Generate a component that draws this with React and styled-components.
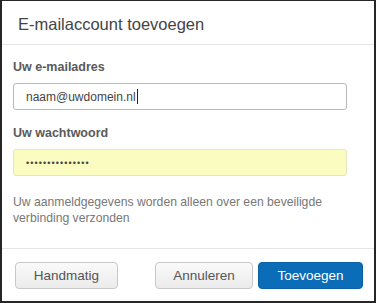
import React from "react";
import styled, { createGlobalStyle } from "styled-components";

const Global = createGlobalStyle`
  html, body {
    margin: 0;
    padding: 0;
    background: #fff;
  }
  body {
    font-family: "Liberation Sans", Arial, sans-serif;
  }
`;

export default function App() {
  return (
    <>
      <Global />
      <Dialog>
        <Header>
          <h1>E-mailaccount toevoegen</h1>
        </Header>
        <Body>
          <Field>
            <Label>Uw e-mailadres</Label>
            <Input>
              naam@uwdomein.nl<Caret />
            </Input>
          </Field>
          <Field>
            <Label>Uw wachtwoord</Label>
            <Input $filled>•••••••••••••••</Input>
          </Field>
          <Help>
            Uw aanmeldgegevens worden alleen over een beveiligde verbinding
            verzonden
          </Help>
        </Body>
        <Footer>
          <Button $w="103px">Handmatig</Button>
          <Spacer />
          <Button $w="98px">Annuleren</Button>
          <Button $w="105px" $primary>
            Toevoegen
          </Button>
        </Footer>
      </Dialog>
    </>
  );
}

const Dialog = styled.div`
  box-sizing: border-box;
  width: 376px;
  height: 303px;
  border: 2px solid #262626;
  border-top-width: 1px;
  background: #fff;
  display: flex;
  flex-direction: column;
`;

const Header = styled.div`
  height: 44px;
  box-sizing: border-box;
  padding: 3px 16px 0;
  display: flex;
  align-items: center;
  border-bottom: 1px solid #e5e5e5;
  h1 {
    margin: 0;
    font-size: 16.5px;
    font-weight: normal;
    color: #444;
  }
`;

const Body = styled.div`
  flex: 1;
  padding: 15px 27px 0 11px;
  display: flex;
  flex-direction: column;
`;

const Field = styled.div`
  display: flex;
  flex-direction: column;
  gap: 9px;
  margin-bottom: 16px;
`;

const Label = styled.label`
  font-size: 12.5px;
  font-weight: bold;
  color: #5a5a5a;
`;

const Input = styled.div`
  box-sizing: border-box;
  height: 27px;
  display: flex;
  align-items: center;
  padding: 0 12px;
  border: 1px solid ${(p) => (p.$filled ? "#e6e6c4" : "#b9b9b9")};
  border-radius: 3px;
  background: ${(p) => (p.$filled ? "#fafcc0" : "#fff")};
  font-size: ${(p) => (p.$filled ? "9px" : "12px")};
  letter-spacing: ${(p) => (p.$filled ? "1.1px" : "0")};
  color: #444;
`;

const Caret = styled.span`
  display: inline-block;
  width: 1px;
  height: 15px;
  margin-left: 1px;
  background: #222;
`;

const Help = styled.p`
  margin: 2px 0 0;
  font-size: 12.2px;
  line-height: 16px;
  color: #777;
`;

const Footer = styled.div`
  height: 53px;
  box-sizing: border-box;
  border-top: 1px solid #e5e5e5;
  padding: 13px 11px 0 13px;
  display: flex;
  align-items: flex-start;
  gap: 5px;
`;

const Spacer = styled.div`
  flex: 1;
`;

const Button = styled.button`
  box-sizing: border-box;
  height: 27px;
  width: ${(p) => p.$w};
  padding: 0;
  border-radius: 4px;
  font-family: inherit;
  font-size: 13.5px;
  border: 1px solid ${(p) => (p.$primary ? "#0c62a4" : "#c8c8c8")};
  background: ${(p) =>
    p.$primary ? "#0b6db8" : "linear-gradient(#fafafa, #ebebeb)"};
  color: ${(p) => (p.$primary ? "#fff" : "#555")};
`;
